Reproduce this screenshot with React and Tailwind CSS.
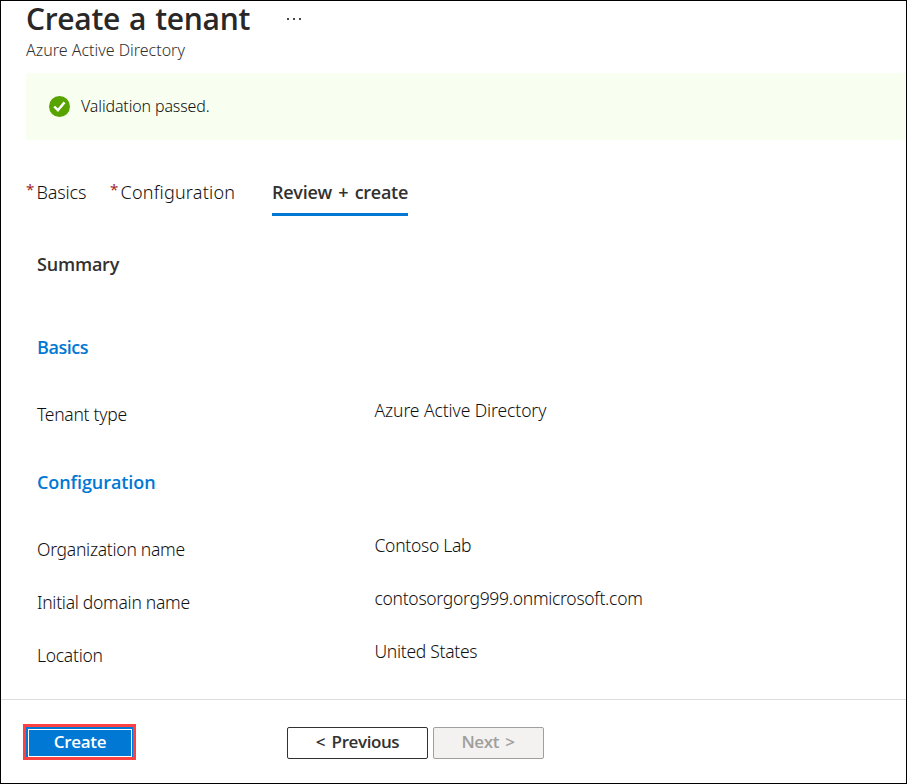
function SummaryRow({ label, value, valueClass = "tracking-[-0.29px]" }) {
  return (
    <div className="flex h-[53px] items-start text-[17.5px] leading-6 font-light text-[#111010]">
      <dt className="w-[337.5px] shrink-0 pt-1 tracking-[-0.27px]">{label}</dt>
      <dd className={valueClass}>{value}</dd>
    </div>
  );
}

function SectionTitle({ children, className }) {
  return (
    <h3 className={`font-['Open_Sans',sans-serif] text-lg leading-6 font-semibold text-[#0078d4] ${className}`}>
      {children}
    </h3>
  );
}

function RequiredTab({ label, className }) {
  return (
    <button className={`flex h-9 items-start text-lg leading-6 font-light text-[#111010] ${className}`}>
      <span className="w-[10.5px] shrink-0 text-left text-[15px] leading-[18px] font-normal text-[#a4262c]">*</span>
      {label}
    </button>
  );
}

export default function App() {
  return (
    <div className="flex h-[784px] w-[907px] flex-col border border-black bg-white font-['Noto_Sans',sans-serif] text-[#323130]">
      <header className="flex h-[72px] flex-col pl-[25px]">
        <div className="flex h-9 items-start">
          <h1 className="w-[259px] font-['Open_Sans',sans-serif] text-[30px] leading-9 font-semibold tracking-[-0.3px] whitespace-nowrap text-[#292827] [word-spacing:1.6px]">
            Create a tenant
          </h1>
          <button aria-label="More actions" className="mt-[17px] ml-[2px] flex gap-1">
            <span className="size-[2px] bg-[#4a4948]" />
            <span className="size-[2px] bg-[#4a4948]" />
            <span className="size-[2px] bg-[#4a4948]" />
          </button>
        </div>
        <p className="mt-px text-base leading-6 font-light text-[#302f2d]">Azure Active Directory</p>
      </header>

      <div className="ml-[25px] flex h-[67px] shrink-0 items-center rounded-l-[2px] bg-[#f8fff0] pl-[23px]">
        <svg viewBox="0 0 21 21" className="size-[21px]">
          <circle cx="10.5" cy="10.5" r="10.5" fill="#57a300" />
          <path d="M5.2 10.5 8.9 14.2 15.5 6.4" fill="none" stroke="#fff" strokeWidth="2.4" />
        </svg>
        <p className="mb-[2px] ml-[11px] text-base leading-6 font-light tracking-[-0.14px] text-[#111010]">Validation passed.</p>
      </div>

      <nav className="mt-10 flex h-9 shrink-0 pl-[25px]">
        <RequiredTab label="Basics" className="w-[84px] tracking-[-0.15px]" />
        <RequiredTab label="Configuration" className="w-[162px] tracking-[0.22px]" />
        <button className="flex h-9 w-[136px] items-start border-b-[3px] border-[#0078d4] font-['Open_Sans',sans-serif] text-lg leading-6 font-semibold tracking-[-0.28px] whitespace-nowrap [word-spacing:2px]">
          Review + create
        </button>
      </nav>

      <main className="flex h-[484px] shrink-0 flex-col border-b border-[#dddddd] pl-9">
        <h2 className="mt-9 font-['Open_Sans',sans-serif] text-lg leading-6 font-semibold tracking-[-0.2px]">Summary</h2>
        <SectionTitle className="mt-[59px] tracking-[-0.45px]">Basics</SectionTitle>
        <dl className="mt-[39px]">
          <SummaryRow label="Tenant type" value="Azure Active Directory" valueClass="tracking-[-0.09px]" />
        </dl>
        <SectionTitle className="mt-[19px] tracking-[-0.08px]">Configuration</SectionTitle>
        <dl className="mt-[39px]">
          <SummaryRow label="Organization name" value="Contoso Lab" />
          <SummaryRow label="Initial domain name" value="contosorgorg999.onmicrosoft.com" />
          <SummaryRow label="Location" value="United States" />
        </dl>
      </main>

      <footer className="flex flex-1 items-start pt-6 pl-[22px] font-['Open_Sans',sans-serif] text-[17px] leading-6 font-semibold">
        <div className="flex h-9 w-[113px] border-[3px] border-[#fb4141]">
          <button className="flex flex-1 bg-[#0078d4] p-[2px] pr-px pb-0 text-white">
            <span className="flex h-7 flex-1 items-center justify-center border border-white pb-[3px] tracking-[-0.3px]">Create</span>
          </button>
        </div>
        <button className="mt-[3px] ml-[151px] flex h-8 w-[141px] items-center justify-center rounded-[2px] border border-[#323130] pb-[3px] tracking-[-0.4px] [word-spacing:2.5px]">
          &lt; Previous
        </button>
        <button className="mt-[3px] ml-[5px] flex h-8 w-[111px] items-center justify-center rounded-[2px] border border-[#a19f9d] bg-[#f3f2f1] pr-px pb-[3px] tracking-[-0.35px] text-[#a19f9d] [word-spacing:2px]">
          Next &gt;
        </button>
      </footer>
    </div>
  );
}
